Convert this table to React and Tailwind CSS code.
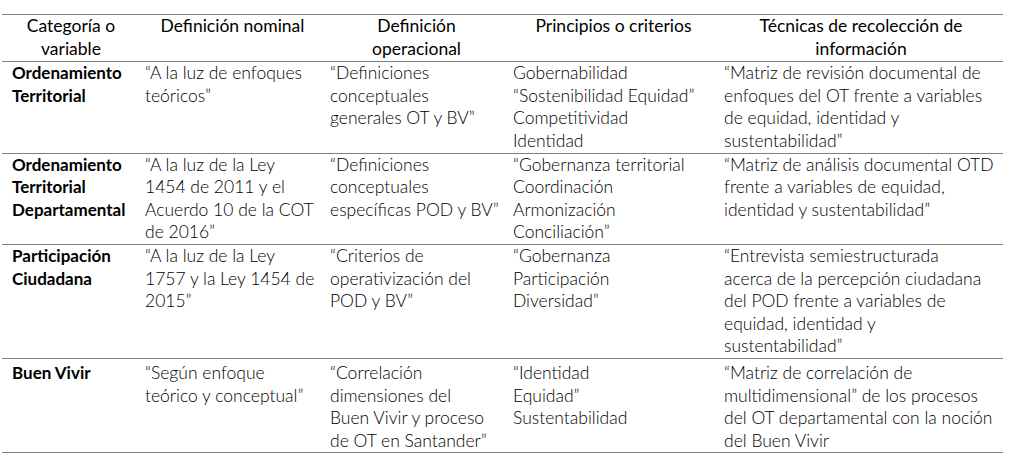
const cols = 'grid grid-cols-[138px_185px_183px_211px_284px]';

const header = [
  ['Categoría o', 'variable'],
  ['Definición nominal'],
  ['Definición', 'operacional'],
  ['Principios o criterios'],
  ['Técnicas de recolección de', 'información'],
];

const rows = [
  {
    pad: '',
    cells: [
      ['Ordenamiento', 'Territorial'],
      ['“A la luz de enfoques', 'teóricos”'],
      ['“Definiciones', 'conceptuales', 'generales OT y BV”'],
      ['Gobernabilidad', '“Sostenibilidad Equidad”', 'Competitividad', 'Identidad'],
      ['“Matriz de revisión documental de', 'enfoques del OT frente a variables', 'de equidad, identidad y', 'sustentabilidad”'],
    ],
  },
  {
    pad: '',
    cells: [
      ['Ordenamiento', 'Territorial', 'Departamental'],
      ['“A la luz de la Ley', '1454 de 2011 y el', 'Acuerdo 10 de la COT', 'de 2016”'],
      ['“Definiciones', 'conceptuales', 'específicas POD y BV”'],
      ['“Gobernanza territorial', 'Coordinación', 'Armonización', 'Conciliación”'],
      ['“Matriz de análisis documental OTD', 'frente a variables de equidad,', 'identidad y sustentabilidad”'],
    ],
  },
  {
    pad: '',
    cells: [
      ['Participación', 'Ciudadana'],
      ['“A la luz de la Ley', '1757 y la Ley 1454 de', '2015”'],
      ['“Criterios de', 'operativización del', 'POD y BV”'],
      ['“Gobernanza', 'Participación', 'Diversidad”'],
      ['“Entrevista semiestructurada', 'acerca de la percepción ciudadana', 'del POD frente a variables de', 'equidad, identidad y', 'sustentabilidad”'],
    ],
  },
  {
    pad: 'pt-[3px]',
    cells: [
      ['Buen Vivir'],
      ['“Según enfoque', 'teórico y conceptual”'],
      ['“Correlación', 'dimensiones del', 'Buen Vivir y proceso', 'de OT en Santander”'],
      ['“Identidad', 'Equidad”', 'Sustentabilidad'],
      ['“Matriz de correlación de', 'multidimensional” de los procesos', 'del OT departamental con la noción', 'del Buen Vivir'],
    ],
  },
];

function Lines({ lines }) {
  return lines.map((l, i) => (
    <div key={i} className="whitespace-nowrap">{l}</div>
  ));
}

export default function App() {
  return (
    <div className="bg-white w-[1033px] h-[465px] pt-[14px] pl-[2px] text-black text-[17.5px] leading-[22.6px] font-['Lato','Open_Sans',sans-serif]">
      <div className="w-[1001px] border-b border-[#808080]">
        <div className={`${cols} border-t border-[#808080] pb-[1px]`}>
          {header.map((h, i) => (
            <div key={i} className="px-[5px] text-center font-normal">
              <Lines lines={h} />
            </div>
          ))}
        </div>
        {rows.map((r, ri) => (
          <div key={ri} className={`${cols} border-t border-[#808080] ${r.pad}`}>
            {r.cells.map((c, ci) => (
              <div
                key={ci}
                className={ci === 0 ? 'pl-[10px] font-bold text-[17px]' : 'pl-[5px] font-light'}
              >
                <Lines lines={c} />
              </div>
            ))}
          </div>
        ))}
      </div>
    </div>
  );
}
